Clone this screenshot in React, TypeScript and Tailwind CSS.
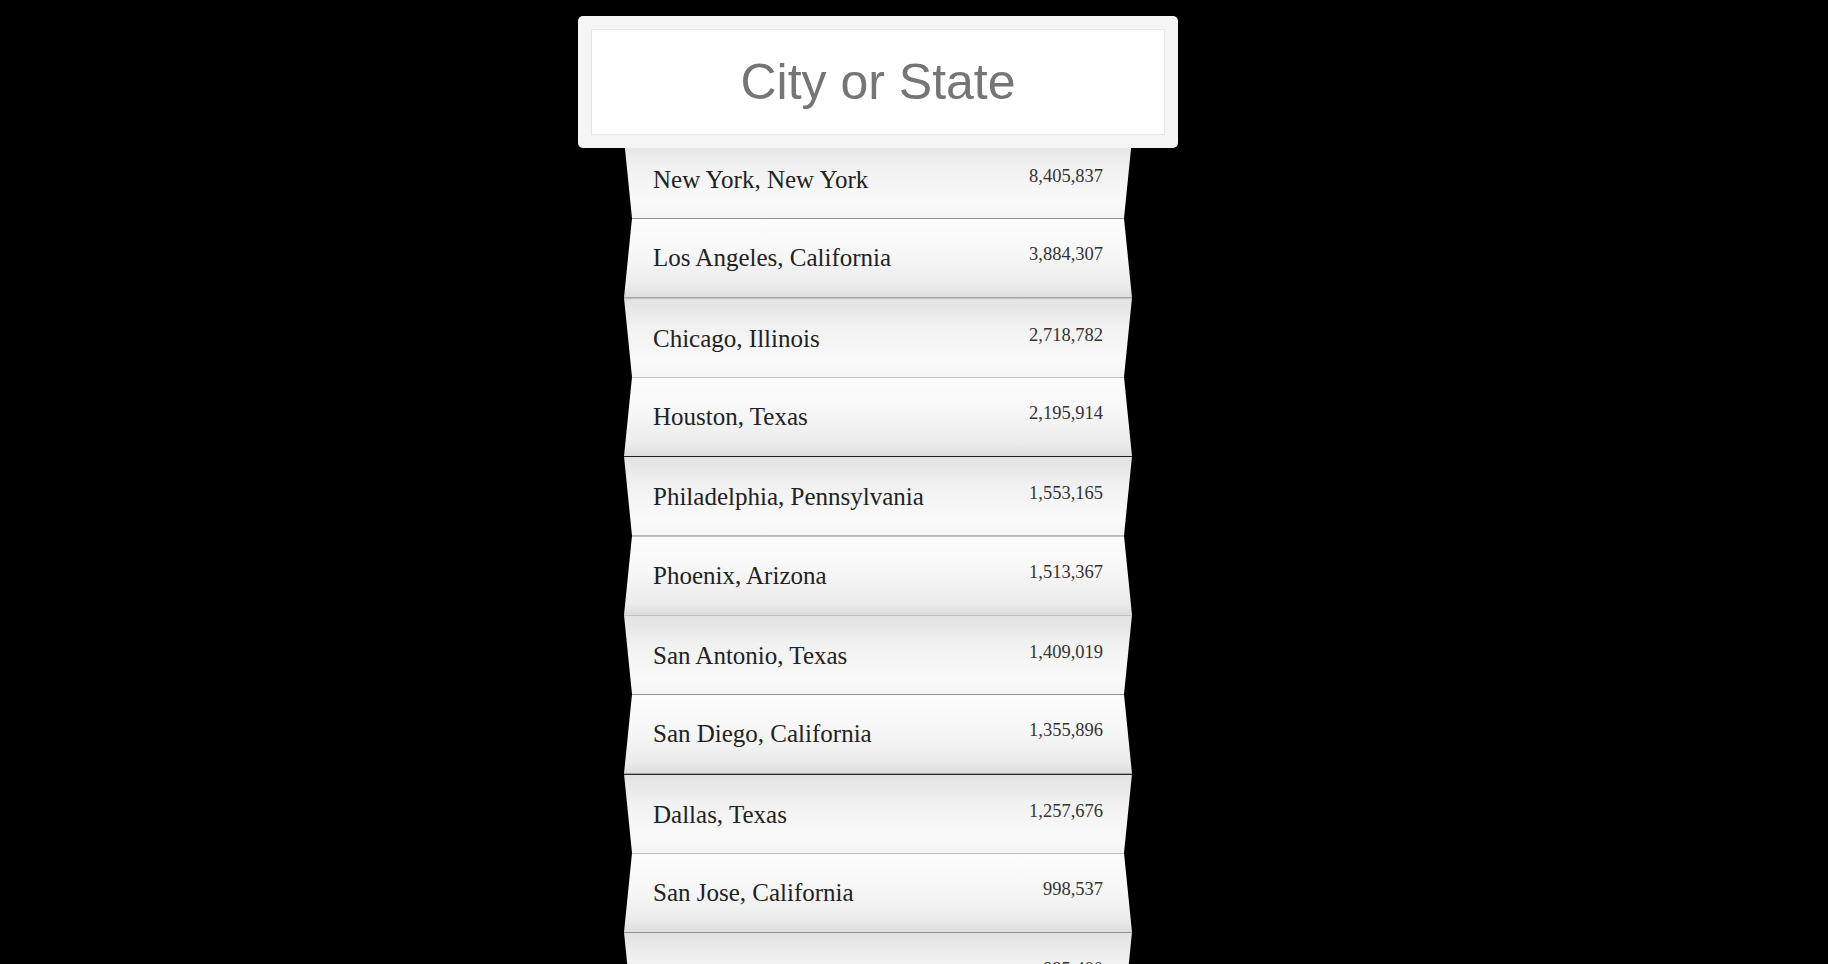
import { useState } from "react";

const cities = [
  { name: "New York, New York", pop: "8,405,837" },
  { name: "Los Angeles, California", pop: "3,884,307" },
  { name: "Chicago, Illinois", pop: "2,718,782" },
  { name: "Houston, Texas", pop: "2,195,914" },
  { name: "Philadelphia, Pennsylvania", pop: "1,553,165" },
  { name: "Phoenix, Arizona", pop: "1,513,367" },
  { name: "San Antonio, Texas", pop: "1,409,019" },
  { name: "San Diego, California", pop: "1,355,896" },
  { name: "Dallas, Texas", pop: "1,257,676" },
  { name: "San Jose, California", pop: "998,537" },
  { name: "Austin, Texas", pop: "885,400" },
  { name: "Indianapolis, Indiana", pop: "843,393" },
  { name: "Jacksonville, Florida", pop: "842,583" },
  { name: "San Francisco, California", pop: "837,442" },
];

export default function App() {
  const [query, setQuery] = useState("");

  const q = query.trim().toLowerCase();
  const shown = q ? cities.filter((c) => c.name.toLowerCase().includes(q)) : cities;

  return (
    <div className="min-h-screen bg-black pt-[16px]">
      <div className="ml-[578px] w-[600px]">
        {/* search box sits over the first fold */}
        <div className="relative z-10 h-[132px] rounded-[5px] bg-[#f5f5f5] p-[13px]">
          <input
            type="text"
            value={query}
            onChange={(e) => setQuery(e.target.value)}
            placeholder="City or State"
            className="h-full w-full border border-[#e6e6e6] bg-white text-center font-['Liberation_Sans',Arial,sans-serif] text-[50px] text-[#333] outline-none placeholder:text-[#757575]"
          />
        </div>

        <ul className="-mt-[9px] ml-[46px] w-[508px]">
          {shown.map((c, i) => {
            const odd = i % 2 === 0;
            const dark = i > 0 && i % 4 === 0;
            const shape = odd
              ? "pt-[27px] bg-[linear-gradient(to_bottom,#e2e2e2_0%,#f1f1f1_35%,#fafafa_80%,#f5f5f5_100%)] [clip-path:polygon(0_0,100%_0,calc(100%-8px)_100%,8px_100%)]"
              : "pt-[26px] bg-[linear-gradient(to_bottom,#fdfdfd_0%,#f7f7f7_45%,#ebebeb_85%,#dcdcdc_100%)] [clip-path:polygon(8px_0,calc(100%-8px)_0,100%_100%,0_100%)]";
            const line = dark ? "border-t border-[#2a2a2a]" : "border-t border-[#c2c2c2]";
            return (
              <li
                key={c.name}
                className={`flex h-[79.33px] items-start justify-between px-[29px] ${shape} ${line}`}
              >
                <span className="font-['Liberation_Serif','Times_New_Roman',serif] text-[25px] leading-[25px] text-[#222]">
                  {c.name}
                </span>
                <span className="font-['Liberation_Serif','Times_New_Roman',serif] text-[18.5px] leading-[18px] text-[#333]">
                  {c.pop}
                </span>
              </li>
            );
          })}
        </ul>
      </div>
    </div>
  );
}
